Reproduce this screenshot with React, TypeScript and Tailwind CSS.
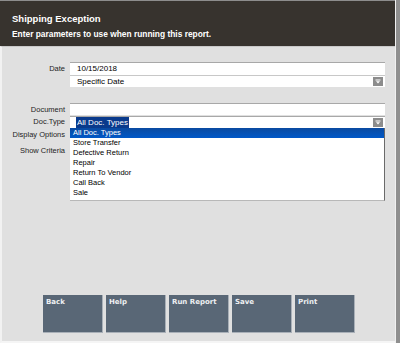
import React from "react";

const docTypes = [
  "All Doc. Types",
  "Store Transfer",
  "Defective Return",
  "Repair",
  "Return To Vendor",
  "Call Back",
  "Sale",
];

const buttons = ["Back", "Help", "Run Report", "Save", "Print"];

function DropArrow() {
  return (
    <span className="flex h-[9px] w-[10px] items-center justify-center bg-[#8c8c8c]">
      <svg width="6" height="5" viewBox="0 0 6 5">
        <rect x="0.5" y="0.5" width="5" height="1" fill="#fff" />
        <path d="M1 2.2 L5 2.2 L3 4.4 Z" fill="#fff" />
      </svg>
    </span>
  );
}

function Label({ children, className = "" }: { children: React.ReactNode; className?: string }) {
  return (
    <div className={`pr-[5px] text-right text-[7.5px] leading-none text-[#1e1e1e] ${className}`}>
      {children}
    </div>
  );
}

export default function App() {
  return (
    <div
      className="flex h-[343px] w-[400px] overflow-hidden bg-[#e0e0e0]"
      style={{ fontFamily: '"Liberation Sans", Arial, sans-serif' }}
    >
      <div className="flex w-[395px] flex-col">
        <div className="flex h-[46px] flex-col border-t border-[#8d8d8d] bg-[#37332e] pl-[12px] pt-[13px]">
          <div className="text-[9.5px] font-bold leading-none text-white">Shipping Exception</div>
          <div className="mt-[6px] text-[8.4px] font-bold leading-none text-white">
            Enter parameters to use when running this report.
          </div>
        </div>
        <div className="flex flex-1 flex-col border-t border-[#c9c9c9] border-l-2 border-l-[#f2f2f2] border-b-2 border-b-[#f5f5f5] bg-[#e0e0e0]">
          <div className="grid grid-cols-[68px_315px] pt-[15px]">
            <Label className="pt-[3px]">Date</Label>
            <div className="flex h-[13px] items-center border-t border-[#a8a8a8] bg-white pl-[7px] text-[8px] text-black">
              10/15/2018
            </div>
            <div />
            <div className="flex h-[12px] items-center justify-between border-t border-[#c8c8c8] bg-white pl-[7px] pr-[2px] text-[8px] text-black">
              <span>Specific Date</span>
              <DropArrow />
            </div>

            <Label className="pt-[19px]">Document</Label>
            <div className="mt-[16px] h-[12px] border-t border-[#a8a8a8] bg-white" />
            <Label className="pt-[3px]">Doc.Type</Label>
            <div className="relative">
              <div className="mt-[1px] flex h-[12px] items-center justify-between border-t border-[#a8a8a8] bg-white pl-[6px] pr-[2px] text-[8px]">
                <span className="bg-[#0a3a8c] px-[1px] text-white">All Doc. Types</span>
                <DropArrow />
              </div>
              <div className="absolute left-0 top-[13px] z-10 flex w-[315px] flex-col border-r border-r-[#6a6a6a] border-b border-b-[#b8b8b8] bg-white pb-[2px] text-[7.5px] text-black">
                {docTypes.map((t, i) => (
                  <div
                    key={t}
                    className={`flex h-[10px] items-center pl-[3px] leading-none ${
                      i === 0 ? "bg-gradient-to-b from-[#0a4aa0] to-[#0058c8] text-white" : ""
                    }`}
                  >
                    {t}
                  </div>
                ))}
              </div>
            </div>
            <Label className="pt-[3px]">Display Options</Label>
            <div />
            <Label className="pt-[8px]">Show Criteria</Label>
            <div />
          </div>

          <div className="mt-auto mb-[8px] flex gap-[3px] pl-[41px]">
            {buttons.map((b) => (
              <div
                key={b}
                className="h-[38px] w-[60px] border-b border-r border-[#a9b0b8] bg-[#596776] pl-[3px] pt-[4px] text-[7px] font-bold leading-none text-[#eef0f2]"
                style={{ fontFamily: '"DejaVu Sans", sans-serif' }}
              >
                {b}
              </div>
            ))}
          </div>
        </div>
      </div>
      <div className="w-[5px] border-l border-[#f0f0f0] bg-[#8f8f8f]" />
    </div>
  );
}
